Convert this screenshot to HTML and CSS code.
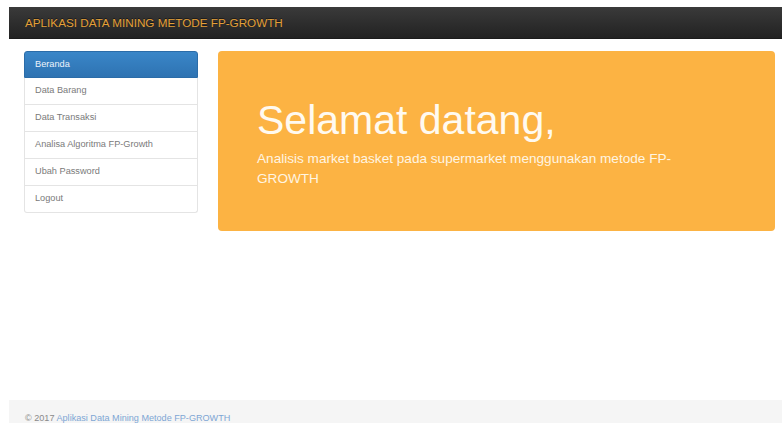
FILE: index.html
```html
<!DOCTYPE html>
<html lang="id">
<head>
<meta charset="utf-8">
<title>Aplikasi Data Mining Metode FP-Growth</title>
<link rel="stylesheet" href="styles.css">
</head>
<body>
<div class="page">
  <nav class="navbar">
    <a class="brand" href="#">APLIKASI DATA MINING METODE FP-GROWTH</a>
  </nav>

  <main class="content">
    <aside class="sidebar">
      <ul class="menu">
        <li class="menu-item active"><a href="#">Beranda</a></li>
        <li class="menu-item"><a href="#">Data Barang</a></li>
        <li class="menu-item"><a href="#">Data Transaksi</a></li>
        <li class="menu-item"><a href="#">Analisa Algoritma FP-Growth</a></li>
        <li class="menu-item"><a href="#">Ubah Password</a></li>
        <li class="menu-item"><a href="#">Logout</a></li>
      </ul>
    </aside>

    <section class="jumbotron">
      <h1 class="welcome">Selamat datang,</h1>
      <p class="lead">Analisis market basket pada supermarket menggunakan metode FP-GROWTH</p>
    </section>
  </main>

  <footer class="footer">
    <p>&copy; 2017 <a href="#">Aplikasi Data Mining Metode FP-GROWTH</a></p>
  </footer>
</div>
</body>
</html>
```

FILE: styles.css
```css
* {
  box-sizing: border-box;
}

html, body {
  margin: 0;
  padding: 0;
  background: #fff;
}

body {
  font-family: "Liberation Sans", Arial, Helvetica, sans-serif;
  color: #333;
}

a {
  text-decoration: none;
}

.page {
  height: 100vh;
  overflow: hidden;
  display: flex;
  flex-direction: column;
  padding: 7px 0 0 9px;
}

/* top bar */
.navbar {
  flex: 0 0 32px;
  display: flex;
  align-items: center;
  padding-left: 16px;
  background: linear-gradient(to bottom, #3a3a3a 0%, #222 100%);
  border-bottom: 1px solid #1b1b1b;
}

.brand {
  font-size: 11.7px;
  color: #e4a038;
  text-shadow: 0 -1px 0 rgba(0, 0, 0, 0.5);
}

/* main area */
.content {
  display: flex;
  align-items: flex-start;
  gap: 20px;
  padding: 12px 7px 0 15px;
}

.sidebar {
  flex: 0 0 174px;
}

.menu {
  list-style: none;
  margin: 0;
  padding: 0;
}

.menu-item a {
  display: block;
  height: 27px;
  line-height: 25px;
  padding-left: 10px;
  font-size: 9.2px;
  color: #7a7a7a;
  background: #fff;
  border: 1px solid #e4e4e4;
  border-top-width: 0;
}

.menu-item:first-child a {
  border-top-width: 1px;
  border-radius: 3px 3px 0 0;
}

.menu-item:last-child a {
  border-radius: 0 0 3px 3px;
}

.menu-item.active a {
  color: #eef4fb;
  background: linear-gradient(to bottom, #3a86c8 0%, #2e73b2 100%);
  border-color: #2b6ca8;
}

.jumbotron {
  flex: 1;
  height: 180px;
  padding: 31px 39px;
  background: #fcb343;
  border-radius: 4px;
  color: #fff;
}

.welcome {
  margin: 16px 0 6px;
  font-size: 41px;
  font-weight: normal;
  line-height: 45px;
  color: #fffaf0;
}

.lead {
  margin: 0;
  font-size: 13.6px;
  line-height: 19.5px;
  color: #fff5e2;
  max-width: 440px;
}

/* bottom bar */
.footer {
  margin-top: auto;
  flex: 0 0 23px;
  background: #f5f5f5;
  padding: 13px 0 0 16px;
  overflow: hidden;
}

.footer p {
  margin: 0;
  font-size: 9.1px;
  line-height: 10px;
  color: #8a8a8a;
}

.footer a {
  color: #7ea6d4;
}
```
